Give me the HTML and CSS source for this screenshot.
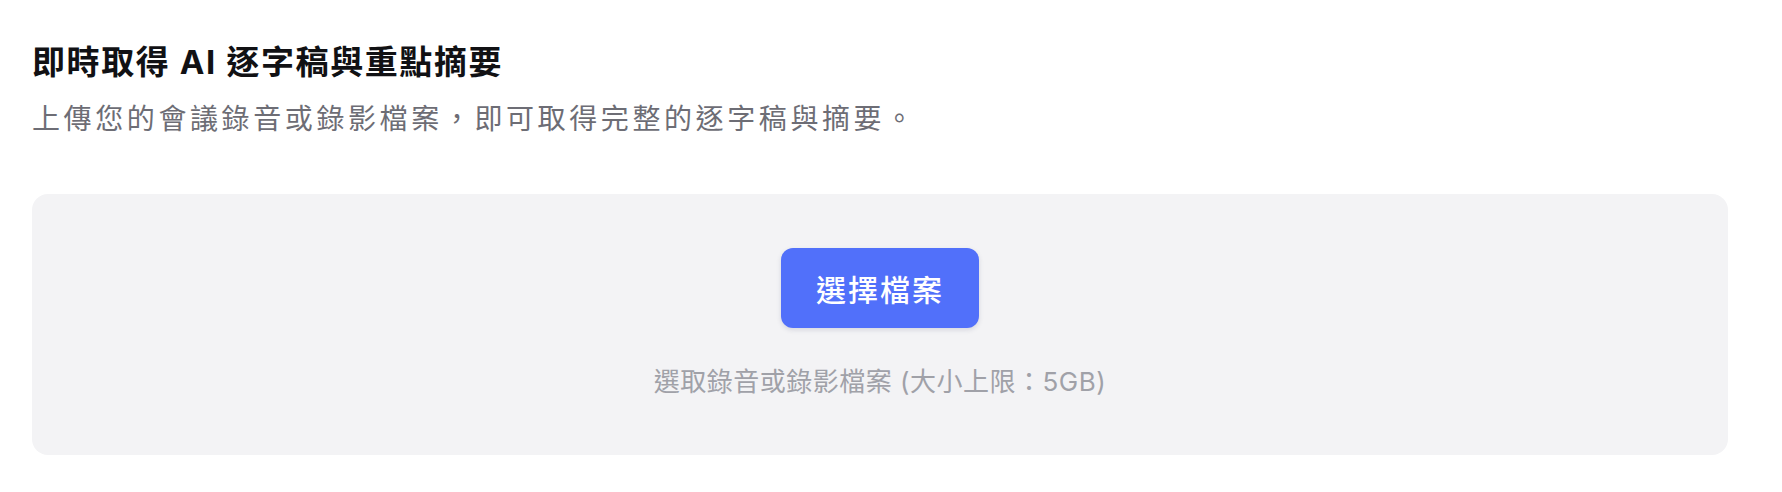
FILE: index.html
```html
<!DOCTYPE html>
<html lang="zh-Hant">
<head>
<meta charset="utf-8">
<title>即時取得 AI 逐字稿與重點摘要</title>
<link rel="stylesheet" href="styles.css">
</head>
<body>
<main class="page">
  <header class="intro">
    <h1 class="title">即時取得 AI 逐字稿與重點摘要</h1>
    <p class="subtitle">上傳您的會議錄音或錄影檔案，即可取得完整的逐字稿與摘要。</p>
  </header>
  <section class="dropzone">
    <button class="pick-btn" type="button">選擇檔案</button>
    <p class="hint">選取錄音或錄影檔案 (大小上限：5GB)</p>
  </section>
</main>
</body>
</html>
```
FILE: styles.css
```css
* { box-sizing: border-box; }
html, body { margin: 0; padding: 0; background: #ffffff; }
body {
  font-family: "Inter", "Noto Sans CJK TC", "Noto Sans CJK SC", sans-serif;
  color: #111114;
}
.page {
  width: 1760px;
  padding: 42px 32px 0 32px;
}
.intro { margin: 0; }
.title {
  margin: 0;
  font-size: 33px;
  line-height: 40px;
  font-weight: 700;
  letter-spacing: 1.6px;
  color: #111114;
}
.subtitle {
  margin: 19px 0 0 0;
  font-size: 28px;
  line-height: 36px;
  letter-spacing: 3.6px;
  color: #6d6d75;
}
.dropzone {
  margin-top: 57px;
  width: 1696px;
  height: 261px;
  background: #f3f3f5;
  border-radius: 16px;
  padding-top: 54px;
  display: flex;
  flex-direction: column;
  align-items: center;
}
.pick-btn {
  width: 198px;
  height: 80px;
  border: none;
  border-radius: 12px;
  background: #5170fa;
  color: #ffffff;
  font-family: inherit;
  font-size: 30px;
  font-weight: 500;
  letter-spacing: 2px;
  box-shadow: 0 2px 5px rgba(40, 50, 90, 0.14);
  cursor: pointer;
}
.hint {
  margin: 36px 0 0 0;
  font-size: 26px;
  line-height: 36px;
  letter-spacing: 0.5px;
  color: #a0a1a8;
}
```
